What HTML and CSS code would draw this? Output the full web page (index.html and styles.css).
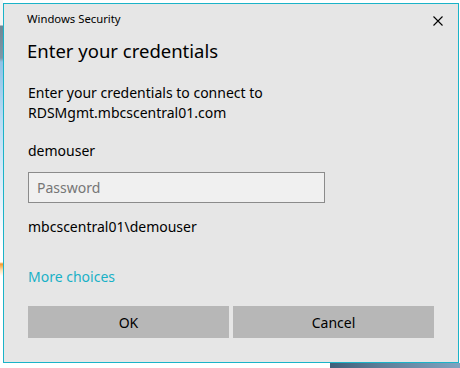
FILE: index.html
```html
<!DOCTYPE html>
<html lang="en">
<head>
<meta charset="utf-8">
<title>Windows Security</title>
<link rel="stylesheet" href="styles.css">
</head>
<body>
<div class="desk-left"></div>
<div class="desk-bottom"></div>
<div class="dialog">
  <div class="titlebar">
    <span class="app-name">Windows Security</span>
    <button class="close" aria-label="Close">
      <svg width="10" height="10" viewBox="0 0 10 10"><path d="M0.5 0.5 L9.5 9.5 M9.5 0.5 L0.5 9.5" stroke="#000" stroke-width="1.1" fill="none"/></svg>
    </button>
  </div>
  <div class="content">
    <h1 class="heading">Enter your credentials</h1>
    <p class="message">Enter your credentials to connect to<br>RDSMgmt.mbcscentral01.com</p>
    <p class="user">demouser</p>
    <input class="password" type="password" placeholder="Password">
    <p class="domain">mbcscentral01\demouser</p>
    <a class="more" href="#">More choices</a>
    <div class="actions">
      <button class="btn">OK</button>
      <button class="btn">Cancel</button>
    </div>
  </div>
</div>
</body>
</html>
```
FILE: styles.css
```css
html, body {
  margin: 0;
  padding: 0;
}
body {
  width: 460px;
  height: 368px;
  background: #ffffff;
  font-family: "Noto Sans", "Open Sans", sans-serif;
  color: #000;
  position: relative;
  overflow: hidden;
}
.desk-left {
  position: absolute;
  left: 0;
  top: 0;
  width: 3px;
  height: 368px;
  background: linear-gradient(to bottom, #f4f4f4 0, #f4f4f4 25px, #6f8796 26px, #7e98a8 58px, #8fc2e6 62px, #b9dcf4 120px, #e4f1fb 200px, #ffffff 250px, #ffffff 262px, #f59a2a 264px, #ffe0b0 270px, #ffffff 276px);
}
.desk-bottom {
  position: absolute;
  left: 330px;
  top: 363px;
  width: 130px;
  height: 5px;
  background: linear-gradient(to right, #3e5f7a, #5d7f99 40%, #7da3c0);
}
.dialog {
  position: relative;
  margin: 3px 0 0 3px;
  width: 454px;
  height: 358px;
  border: 1px solid #1ab3c8;
  background: #e6e6e6;
  display: flex;
  flex-direction: column;
}
.titlebar {
  display: flex;
  align-items: center;
  justify-content: space-between;
  padding: 7px 15px 0 23px;
  height: 16px;
}
.app-name {
  font-size: 11.3px;
  line-height: 16px;
}
.close {
  border: 0;
  padding: 0;
  margin: 0;
  background: none;
  width: 10px;
  height: 10px;
  display: block;
  margin-top: 3px;
}
.close svg { display: block; }
.content {
  padding: 0 24px;
  display: flex;
  flex-direction: column;
}
.heading {
  margin: 10px 0 0 -1px;
  font-size: 18.5px;
  font-weight: 400;
  line-height: 28px;
}
.message, .user, .domain {
  margin: 0;
  font-size: 14px;
  line-height: 20px;
}
.message { margin-top: 18px; }
.user { margin-top: 18px; }
.password {
  margin: 11px 0 0 0;
  width: 297px;
  height: 31px;
  box-sizing: border-box;
  border: 1px solid #8b8b8b;
  background: #f0f0f0;
  padding: 0 8px;
  font-family: inherit;
  font-size: 14px;
  outline: none;
}
.password::placeholder { color: #767676; }
.domain { margin-top: 14px; }
.more {
  margin-top: 30px;
  font-size: 14px;
  line-height: 20px;
  color: #19b1c6;
  text-decoration: none;
  align-self: flex-start;
}
.actions {
  margin-top: 19px;
  display: grid;
  grid-template-columns: 1fr 1fr;
  column-gap: 4px;
}
.btn {
  height: 32px;
  border: 0;
  background: #b7b7b7;
  font-family: inherit;
  font-size: 14px;
  color: #000;
  padding: 0;
}
```
